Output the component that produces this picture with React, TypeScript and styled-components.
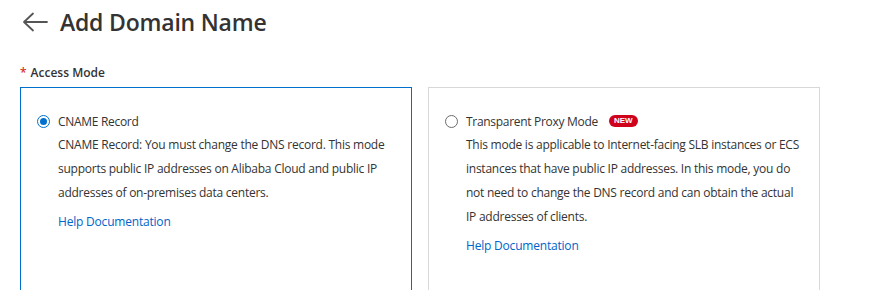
import React, { useState } from "react";
import styled, { createGlobalStyle } from "styled-components";

const GlobalStyle = createGlobalStyle`
  body {
    margin: 0;
    background: #ffffff;
    font-family: "Segoe UI", "Open Sans", "Noto Sans", sans-serif;
    color: #333333;
  }
`;

const Page = styled.div`
  padding: 6px 20px 0 20px;
`;

const Header = styled.div`
  display: flex;
  align-items: center;
  gap: 12px;
  height: 32px;
`;

const BackButton = styled.button`
  display: flex;
  align-items: center;
  padding: 0;
  margin-left: 2px;
  border: none;
  background: none;
  cursor: pointer;
`;

const Title = styled.h1`
  margin: 0;
  font-size: 23px;
  font-weight: 600;
  color: #333333;
  letter-spacing: -0.2px;
`;

const FieldLabel = styled.div`
  margin-top: 27px;
  font-size: 12px;
  font-weight: 600;
  line-height: 16px;
  color: #333333;
`;

const Required = styled.span`
  color: #d93026;
  margin-right: 4px;
`;

const Cards = styled.div`
  display: flex;
  gap: 16px;
  margin-top: 6px;
`;

const Card = styled.div<{ $active: boolean }>`
  box-sizing: border-box;
  width: 392px;
  min-height: 210px;
  padding: 24px 16px 16px 16px;
  border: 1px solid ${(p) => (p.$active ? "#0070cc" : "#d8d8d8")};
  background: #ffffff;
  cursor: pointer;
`;

const OptionRow = styled.div`
  display: flex;
  align-items: center;
  gap: 8px;
  height: 18px;
`;

const Radio = styled.span<{ $checked: boolean }>`
  box-sizing: border-box;
  width: 13px;
  height: 13px;
  border-radius: 50%;
  border: 1px solid ${(p) => (p.$checked ? "#0070cc" : "#6b6b6b")};
  display: flex;
  align-items: center;
  justify-content: center;
  flex-shrink: 0;
  &::after {
    content: "";
    width: 7px;
    height: 7px;
    border-radius: 50%;
    background: ${(p) => (p.$checked ? "#0070cc" : "transparent")};
  }
`;

const OptionTitle = styled.span`
  font-size: 12px;
  color: #333333;
  letter-spacing: -0.3px;
`;

const NewBadge = styled.span`
  margin-left: 3px;
  padding: 0 5px;
  height: 12px;
  line-height: 12px;
  border-radius: 6px;
  background: #d0021b;
  color: #ffffff;
  font-size: 8px;
  font-weight: 700;
  font-family: "Liberation Sans", Arial, sans-serif;
`;

const Body = styled.div`
  padding-left: 21px;
`;

const Description = styled.p`
  margin: 3px 0 0 0;
  font-size: 12px;
  line-height: 24px;
  color: #333333;
  letter-spacing: -0.25px;
`;

const HelpLink = styled.a`
  display: inline-block;
  margin-top: 7px;
  font-size: 12px;
  line-height: 20px;
  color: #0064c8;
  text-decoration: none;
  letter-spacing: -0.2px;
`;

const BackArrow = () => (
  <svg width="26" height="20" viewBox="0 0 26 20" fill="none">
    <path
      d="M25 10H2M11 1.5L2 10l9 8.5"
      stroke="#555555"
      strokeWidth="1.8"
      strokeLinecap="round"
      strokeLinejoin="round"
    />
  </svg>
);

const modes = [
  {
    id: "cname",
    title: "CNAME Record",
    isNew: false,
    text: "CNAME Record: You must change the DNS record. This mode supports public IP addresses on Alibaba Cloud and public IP addresses of on-premises data centers.",
  },
  {
    id: "proxy",
    title: "Transparent Proxy Mode",
    isNew: true,
    text: "This mode is applicable to Internet-facing SLB instances or ECS instances that have public IP addresses. In this mode, you do not need to change the DNS record and can obtain the actual IP addresses of clients.",
  },
];

const App = () => {
  const [mode, setMode] = useState("cname");

  return (
    <Page>
      <GlobalStyle />
      <Header>
        <BackButton aria-label="Back">
          <BackArrow />
        </BackButton>
        <Title>Add Domain Name</Title>
      </Header>
      <FieldLabel>
        <Required>*</Required>Access Mode
      </FieldLabel>
      <Cards>
        {modes.map((m) => (
          <Card key={m.id} $active={mode === m.id} onClick={() => setMode(m.id)}>
            <OptionRow>
              <Radio $checked={mode === m.id} />
              <OptionTitle>{m.title}</OptionTitle>
              {m.isNew && <NewBadge>NEW</NewBadge>}
            </OptionRow>
            <Body>
              <Description>{m.text}</Description>
              <HelpLink href="#">Help Documentation</HelpLink>
            </Body>
          </Card>
        ))}
      </Cards>
    </Page>
  );
};

export default App;
